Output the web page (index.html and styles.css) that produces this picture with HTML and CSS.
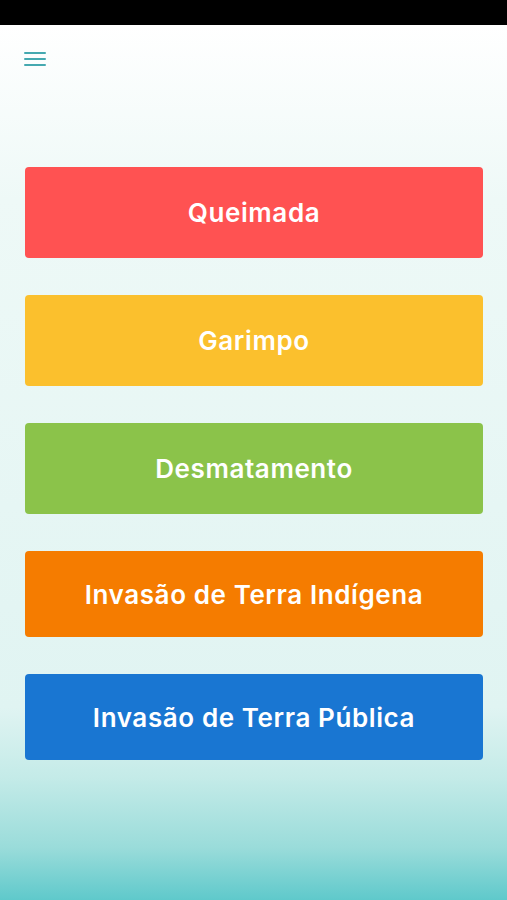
FILE: index.html
```html
<!DOCTYPE html>
<html lang="pt">
<head>
    <meta charset="UTF-8">
    <meta name="viewport" content="width=device-width, initial-scale=1.0">
    <title>Denúncias</title>
    <link rel="stylesheet" href="styles.css">
</head>
<body>
    <div class="status-bar"></div>
    <div class="screen">
        <div class="header">
            <button class="menu" aria-label="Menu">
                <svg width="22" height="14" viewBox="0 0 22 14">
                    <rect x="0" y="0" width="22" height="2" rx="1" fill="#45a9b0"/>
                    <rect x="0" y="6" width="22" height="2" rx="1" fill="#45a9b0"/>
                    <rect x="0" y="12" width="22" height="2" rx="1" fill="#45a9b0"/>
                </svg>
            </button>
        </div>
        <div class="options">
            <button class="option tall red">Queimada</button>
            <button class="option tall yellow">Garimpo</button>
            <button class="option tall green">Desmatamento</button>
            <button class="option orange">Invasão de Terra Indígena</button>
            <button class="option blue">Invasão de Terra Pública</button>
        </div>
    </div>
</body>
</html>
```

FILE: styles.css
```css
body {
    margin: 0;
    padding: 0;
    font-family: Inter, "Noto Sans", sans-serif;
    height: 900px;
    display: flex;
    flex-direction: column;
}
.status-bar {
    height: 25px;
    background-color: #000;
}
.screen {
    flex-grow: 1;
    background: linear-gradient(to bottom, #ffffff 0%, #eef9f7 20%, #e6f6f4 55%, #e0f4f2 78%, #c4ebe8 86%, #9adcda 94%, #5fc9cb 100%);
}
.header {
    height: 72px;
    padding-left: 24px;
    display: flex;
    align-items: flex-start;
}
.menu {
    margin-top: 27px;
    padding: 0;
    border: none;
    background: none;
    display: flex;
    cursor: pointer;
}
.options {
    display: flex;
    flex-direction: column;
    gap: 37px;
    padding: 70px 24px 0 25px;
}
.option {
    height: 86px;
    border: none;
    border-radius: 4px;
    color: #fff;
    font-family: Inter, "Noto Sans", sans-serif;
    font-size: 26px;
    font-weight: 600;
    letter-spacing: 0.6px;
    cursor: pointer;
}
.option.tall {
    height: 91px;
}
.red { background-color: #ff5252; }
.yellow { background-color: #fbc02d; }
.green { background-color: #8bc34a; }
.orange { background-color: #f57c00; }
.blue { background-color: #1976d2; }
```
